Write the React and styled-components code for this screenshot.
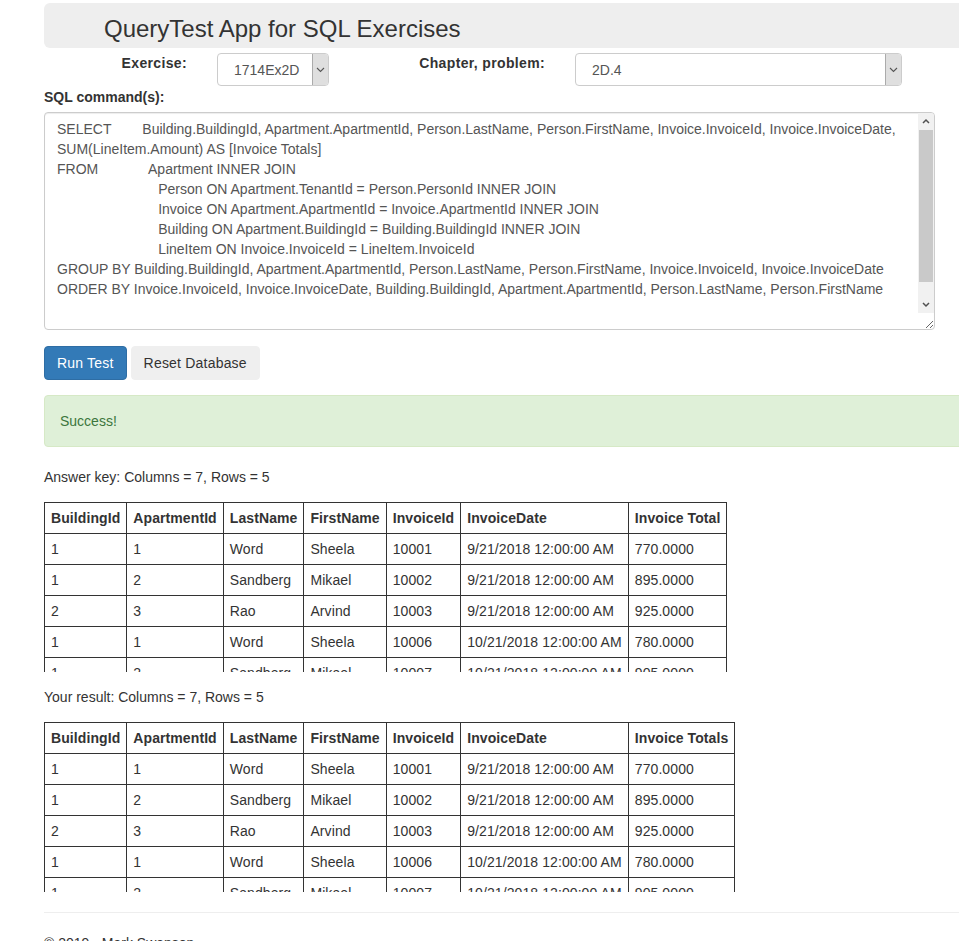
import React from "react";
import styled, { createGlobalStyle } from "styled-components";

const GlobalStyle = createGlobalStyle`
  html, body {
    margin: 0;
    overflow: hidden;
    background: #fff;
  }
  body {
    font-family: "Liberation Sans", Arial, sans-serif;
    font-size: 14px;
    line-height: 20px;
    color: #333;
  }
  * {
    box-sizing: border-box;
  }
`;

const sqlText =
  "SELECT        Building.BuildingId, Apartment.ApartmentId, Person.LastName, Person.FirstName, Invoice.InvoiceId, Invoice.InvoiceDate,\n" +
  "SUM(LineItem.Amount) AS [Invoice Totals]\n" +
  "FROM             Apartment INNER JOIN\n" +
  "                          Person ON Apartment.TenantId = Person.PersonId INNER JOIN\n" +
  "                          Invoice ON Apartment.ApartmentId = Invoice.ApartmentId INNER JOIN\n" +
  "                          Building ON Apartment.BuildingId = Building.BuildingId INNER JOIN\n" +
  "                          LineItem ON Invoice.InvoiceId = LineItem.InvoiceId\n" +
  "GROUP BY Building.BuildingId, Apartment.ApartmentId, Person.LastName, Person.FirstName, Invoice.InvoiceId, Invoice.InvoiceDate\n" +
  "ORDER BY Invoice.InvoiceId, Invoice.InvoiceDate, Building.BuildingId, Apartment.ApartmentId, Person.LastName, Person.FirstName\n\n";

const rows = [
  ["1", "1", "Word", "Sheela", "10001", "9/21/2018 12:00:00 AM", "770.0000"],
  ["1", "2", "Sandberg", "Mikael", "10002", "9/21/2018 12:00:00 AM", "895.0000"],
  ["2", "3", "Rao", "Arvind", "10003", "9/21/2018 12:00:00 AM", "925.0000"],
  ["1", "1", "Word", "Sheela", "10006", "10/21/2018 12:00:00 AM", "780.0000"],
  ["1", "2", "Sandberg", "Mikael", "10007", "10/21/2018 12:00:00 AM", "905.0000"],
];

const baseColumns = [
  "BuildingId",
  "ApartmentId",
  "LastName",
  "FirstName",
  "InvoiceId",
  "InvoiceDate",
];

function Chevron({ up, color = "#505050" }) {
  return (
    <svg width="8" height="6" viewBox="0 0 8 6">
      <polyline
        points={up ? "1,5 4,2 7,5" : "1,1 4,4 7,1"}
        fill="none"
        stroke={color}
        strokeWidth="1.5"
      />
    </svg>
  );
}

function Select({ value, width }) {
  return (
    <SelectWrap $width={width}>
      <NativeSelect defaultValue={value}>
        <option value={value}>{value}</option>
      </NativeSelect>
      <ArrowBox>
        <svg width="9" height="6" viewBox="0 0 9 6">
          <polyline
            points="1,1 4.5,4.5 8,1"
            fill="none"
            stroke="#555"
            strokeWidth="1.1"
          />
        </svg>
      </ArrowBox>
    </SelectWrap>
  );
}

function ResultTable({ lastColumn }) {
  const columns = [...baseColumns, lastColumn];
  return (
    <TableScroll>
      <Table>
        <thead>
          <tr>
            {columns.map((c) => (
              <Th key={c}>{c}</Th>
            ))}
          </tr>
        </thead>
        <tbody>
          {rows.map((r, i) => (
            <tr key={i}>
              {r.map((v, j) => (
                <Td key={j}>{v}</Td>
              ))}
            </tr>
          ))}
        </tbody>
      </Table>
    </TableScroll>
  );
}

export default function App() {
  return (
    <Page>
      <GlobalStyle />
      <Jumbotron>
        <Title>QueryTest App for SQL Exercises</Title>
      </Jumbotron>

      <ChooserRow>
        <FieldLabel>Exercise:</FieldLabel>
        <Select value="1714Ex2D" width={112} />
        <FieldLabel>Chapter, problem:</FieldLabel>
        <Select value="2D.4" width={327} />
      </ChooserRow>

      <SqlLabel>SQL command(s):</SqlLabel>
      <SqlFrame>
        <SqlBox defaultValue={sqlText} spellCheck={false} />
        <ScrollBar>
          <ScrollButton>
            <Chevron up />
          </ScrollButton>
          <ScrollTrack>
            <ScrollThumb />
          </ScrollTrack>
          <ScrollButton>
            <Chevron />
          </ScrollButton>
        </ScrollBar>
      </SqlFrame>

      <ButtonRow>
        <Button $primary>Run Test</Button>
        <Button>Reset Database</Button>
      </ButtonRow>

      <Alert>Success!</Alert>

      <Caption $gap={20}>Answer key: Columns = 7, Rows = 5</Caption>
      <ResultTable lastColumn="Invoice Total" />

      <Caption $gap={15}>Your result: Columns = 7, Rows = 5</Caption>
      <ResultTable lastColumn="Invoice Totals" />

      <Rule />
      <Footer>© 2019 - Mark Swanson</Footer>
    </Page>
  );
}

const Page = styled.div`
  width: 1184px;
  padding: 3px 0 0 44px;
`;

const Jumbotron = styled.div`
  background: #eeeeee;
  border-radius: 6px;
  padding: 12px 60px 6px;
`;

const Title = styled.h1`
  margin: 0;
  font-size: 24px;
  line-height: 27px;
  font-weight: 400;
  color: #333;
`;

const ChooserRow = styled.div`
  display: grid;
  grid-template-columns: 143px 112px 186px 327px;
  column-gap: 30px;
  align-items: start;
  margin-top: 5px;
`;

const FieldLabel = styled.label`
  text-align: right;
  font-weight: 700;
  line-height: 20px;
  letter-spacing: 0.35px;
`;

const SelectWrap = styled.div`
  position: relative;
  width: ${(p) => p.$width}px;
  height: 33px;
`;

const NativeSelect = styled.select`
  appearance: none;
  width: 100%;
  height: 100%;
  border: 1px solid #ccc;
  border-radius: 4px;
  background: #fff;
  padding: 0 20px 0 16px;
  font-family: "Liberation Sans", Arial, sans-serif;
  font-size: 14px;
  color: #555;
  outline: none;
`;

const ArrowBox = styled.span`
  position: absolute;
  top: 1px;
  right: 1px;
  bottom: 1px;
  width: 16px;
  background: #dfdfdf;
  border-left: 1px solid #ababab;
  border-radius: 0 3px 3px 0;
  display: flex;
  align-items: center;
  justify-content: center;
  pointer-events: none;
`;

const SqlLabel = styled.div`
  font-weight: 700;
  margin-top: 1px;
`;

const SqlFrame = styled.div`
  position: relative;
  width: 891px;
  margin-top: 5px;
`;

const SqlBox = styled.textarea`
  display: block;
  width: 891px;
  height: 218px;
  padding: 6px 29px 6px 12px;
  border: 1px solid #ccc;
  border-radius: 4px;
  font-family: "Liberation Sans", Arial, sans-serif;
  font-size: 14px;
  line-height: 20px;
  color: #555;
  white-space: pre-wrap;
  overflow: hidden;
  box-shadow: inset 0 1px 1px rgba(0, 0, 0, 0.075);
  outline: none;
`;

const ScrollBar = styled.div`
  position: absolute;
  top: 1px;
  right: 1px;
  bottom: 17px;
  width: 16px;
  display: flex;
  flex-direction: column;
  background: #f1f1f1;
  border-top-right-radius: 3px;
  pointer-events: none;
`;

const ScrollButton = styled.div`
  height: 16px;
  flex: none;
  display: flex;
  align-items: center;
  justify-content: center;
`;

const ScrollTrack = styled.div`
  flex: 1;
  padding: 1px 1px 15px;
  display: flex;
`;

const ScrollThumb = styled.div`
  flex: 1;
  background: #c9c9c9;
`;

const ButtonRow = styled.div`
  display: flex;
  gap: 4px;
  margin-top: 16px;
`;

const Button = styled.button`
  height: 34px;
  padding: 6px 12px;
  font-family: "Liberation Sans", Arial, sans-serif;
  font-size: 14px;
  line-height: 20px;
  letter-spacing: 0.2px;
  border-radius: 4px;
  border: 1px solid ${(p) => (p.$primary ? "#2e6da4" : "#efefef")};
  background: ${(p) => (p.$primary ? "#337ab7" : "#efefef")};
  color: ${(p) => (p.$primary ? "#fff" : "#333")};
  cursor: pointer;
`;

const Alert = styled.div`
  margin-top: 15px;
  padding: 15px;
  border: 1px solid #d6e9c6;
  border-radius: 4px;
  background: #dff0d8;
  color: #3c763d;
`;

const Caption = styled.div`
  margin-top: ${(p) => p.$gap}px;
`;

const TableScroll = styled.div`
  height: 170px;
  overflow-y: auto;
  margin-top: 15px;
`;

const Table = styled.table`
  border-collapse: collapse;
  color: #333;
  letter-spacing: 0.09px;
`;

const Th = styled.th`
  border: 1px solid #333;
  padding: 5px 6px;
  text-align: left;
  font-weight: 700;
  white-space: nowrap;
`;

const Td = styled.td`
  border: 1px solid #333;
  padding: 5px 6px;
  white-space: nowrap;
`;

const Rule = styled.hr`
  margin: 20px 0;
  border: 0;
  border-top: 1px solid #eee;
`;

const Footer = styled.p`
  margin: 0;
`;
